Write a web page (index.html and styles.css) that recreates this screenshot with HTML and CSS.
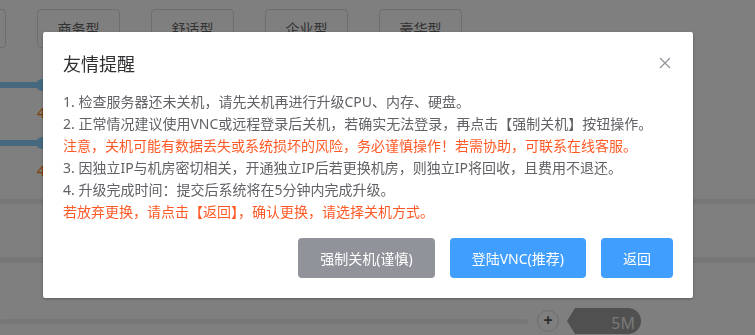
FILE: index.html
```html
<html>
<head>
  <title>友情提醒</title>
  <link rel="stylesheet" href="styles.css">
</head>
<body>
  <div class="page">
    <div class="types">
      <div class="type-card"></div>
      <div class="type-card">商务型</div>
      <div class="type-card">舒适型</div>
      <div class="type-card">企业型</div>
      <div class="type-card">豪华型</div>
    </div>

    <div class="slider first">
      <div class="track"></div>
      <div class="value">4核</div>
    </div>
    <div class="slider">
      <div class="track"></div>
      <div class="value">4G</div>
    </div>

    <div class="band one"></div>
    <div class="band two"></div>

    <div class="bandwidth">
      <div class="bw-track"></div>
      <div class="bw-plus">+</div>
      <div class="bw-tag">5M</div>
    </div>
  </div>

  <div class="mask">
    <div class="dialog">
      <div class="dialog-header">
        <span class="dialog-title">友情提醒</span>
        <svg class="dialog-close" width="12" height="12" viewBox="0 0 12 12">
          <path d="M1 1 L11 11 M11 1 L1 11" stroke="#909399" stroke-width="1.2" fill="none"/>
        </svg>
      </div>
      <div class="dialog-body">
        <p>1. 检查服务器还未关机，请先关机再进行升级CPU、内存、硬盘。</p>
        <p>2. 正常情况建议使用VNC或远程登录后关机，若确实无法登录，再点击【强制关机】按钮操作。</p>
        <p class="warn">注意，关机可能有数据丢失或系统损坏的风险，务必谨慎操作！若需协助，可联系在线客服。</p>
        <p>3. 因独立IP与机房密切相关，开通独立IP后若更换机房，则独立IP将回收，且费用不退还。</p>
        <p>4. 升级完成时间：提交后系统将在5分钟内完成升级。</p>
        <p class="warn">若放弃更换，请点击【返回】，确认更换，请选择关机方式。</p>
      </div>
      <div class="dialog-footer">
        <button class="btn btn-gray">强制关机(谨慎)</button>
        <button class="btn btn-blue">登陆VNC(推荐)</button>
        <button class="btn btn-blue">返回</button>
      </div>
    </div>
  </div>
</body>
</html>
```

FILE: styles.css
```css
body {
  margin: 0;
  padding: 0;
  background-color: #fff;
  font-family: "Noto Sans", "Noto Sans CJK SC", sans-serif;
  overflow: hidden;
}
.page {
  height: 335px;
}
.types {
  display: flex;
  gap: 31px;
  padding-top: 9px;
  margin-left: -77px;
}
.type-card {
  width: 81px;
  height: 37px;
  border: 1px solid #dcdcdc;
  border-radius: 4px;
  color: #666;
  font-size: 14px;
  line-height: 37px;
  text-align: center;
}
.slider {
  padding-top: 17px;
}
.slider.first {
  padding-top: 34px;
}
.track {
  position: relative;
  width: 40px;
  height: 6px;
  background-color: #8cd2ff;
}
.track::after {
  content: "";
  position: absolute;
  right: -8px;
  top: -3px;
  width: 12px;
  height: 12px;
  border-radius: 50%;
  background-color: #8cd2ff;
}
.value {
  margin-top: 15px;
  padding-left: 37px;
  color: #ff7a10;
  font-size: 14px;
  line-height: 20px;
}
.band {
  background-color: #eee;
}
.band.one {
  margin-top: 18px;
  height: 5px;
}
.band.two {
  margin-top: 53px;
  height: 6px;
}
.bandwidth {
  display: flex;
  align-items: center;
  margin-top: 45px;
  height: 26px;
}
.bw-track {
  width: 528px;
  height: 5px;
  border-radius: 3px;
  background-color: #eee;
}
.bw-plus {
  width: 20px;
  height: 20px;
  margin-left: 9px;
  border: 1px solid #d8d8d8;
  border-radius: 50%;
  color: #555;
  font-size: 16px;
  font-weight: bold;
  line-height: 19px;
  text-align: center;
}
.bw-tag {
  position: relative;
  margin-left: 16px;
  width: 66px;
  height: 26px;
  padding-right: 6px;
  box-sizing: border-box;
  border-radius: 0 13px 13px 0;
  background-color: #a0a0a0;
  color: #f0f0f0;
  font-size: 16px;
  line-height: 30px;
  text-align: right;
}
.bw-tag::before {
  content: "";
  position: absolute;
  left: -8px;
  top: 0;
  border-top: 13px solid transparent;
  border-bottom: 13px solid transparent;
  border-right: 8px solid #a0a0a0;
}

/* modal */
.mask {
  position: fixed;
  left: 0;
  top: 0;
  right: 0;
  bottom: 0;
  background-color: rgba(0, 0, 0, 0.5);
}
.dialog {
  width: 650px;
  margin: 32px 0 0 43px;
  background-color: #fff;
  border-radius: 2px;
  box-shadow: 0 1px 3px rgba(0, 0, 0, 0.3);
}
.dialog-header {
  display: flex;
  justify-content: space-between;
  align-items: center;
  padding: 20px 22px 10px 20px;
}
.dialog-title {
  color: #303133;
  font-size: 18px;
  line-height: 24px;
}
.dialog-close {
  display: block;
  margin-top: -2px;
}
.dialog-body {
  padding: 5px 20px 15px;
  color: #606266;
  font-size: 14px;
  line-height: 22px;
}
.dialog-body p {
  margin: 0;
  white-space: nowrap;
}
.dialog-body .warn {
  color: #ff5a26;
}
.dialog-footer {
  display: flex;
  justify-content: flex-end;
  gap: 15px;
  padding: 0 20px 20px;
}
.btn {
  height: 40px;
  padding: 0 22px;
  border: none;
  border-radius: 4px;
  color: #fff;
  font-family: "Noto Sans", "Noto Sans CJK SC", sans-serif;
  font-size: 14px;
}
.btn-gray {
  background-color: #909399;
}
.btn-blue {
  background-color: #409eff;
}
```
